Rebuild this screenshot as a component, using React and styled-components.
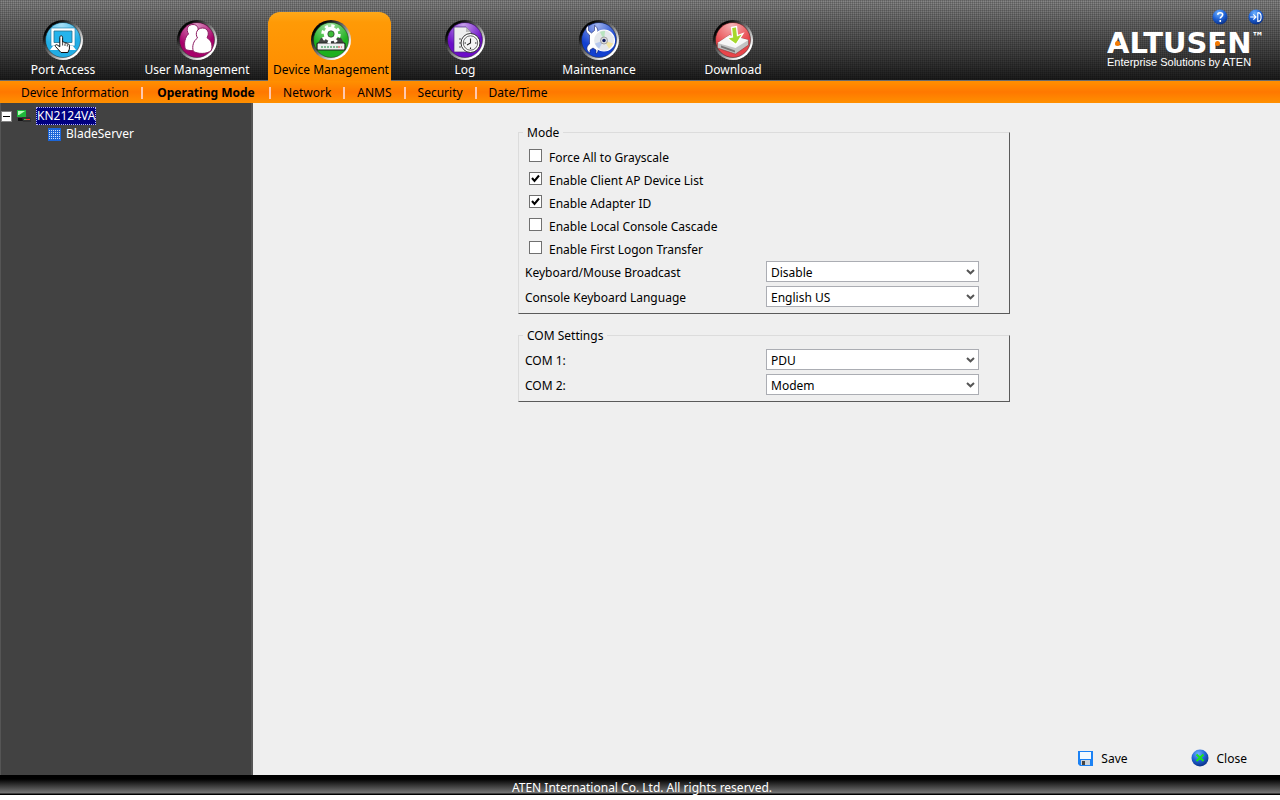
import React, { useState } from 'react';
import styled, { createGlobalStyle } from 'styled-components';

const tabs = [
  { label: 'Port Access', color: '#22aee6', icon: PortArt },
  { label: 'User Management', color: '#a8006a', icon: UserArt },
  { label: 'Device Management', color: '#1fb01f', icon: DeviceArt },
  { label: 'Log', color: '#6c0cc8', icon: LogArt },
  { label: 'Maintenance', color: '#1240d0', icon: MaintenanceArt },
  { label: 'Download', color: '#e8454a', icon: DownloadArt }
];

const links = ['Device Information', 'Operating Mode', 'Network', 'ANMS', 'Security', 'Date/Time'];

const modes = [
  { id: 'grayscale', label: 'Force All to Grayscale', on: false },
  { id: 'clientAp', label: 'Enable Client AP Device List', on: true },
  { id: 'adapterId', label: 'Enable Adapter ID', on: true },
  { id: 'cascade', label: 'Enable Local Console Cascade', on: false },
  { id: 'transfer', label: 'Enable First Logon Transfer', on: false }
];

function PortArt() {
  return (
    <g>
      <path d="M9 9h24v18H9z" fill="#fff" stroke="#157aa8" strokeWidth=".6" />
      <path d="M12 12h18v11.500H12z" fill="#25b4ec" stroke="#28708e" strokeWidth=".8" />
      <path d="M8 31l3-4h20l3 4z" fill="#fff" />
      <path
        d="M19 33.500l-5.500-6c-1-1.200.6-2.400 1.800-1.500l2.500 1.800v-9.500c0-2 2.800-2 2.800 0v5c1-.7 2.300-.2 2.400.8 1-.5 2.200 0 2.400.9 1-.3 2 .4 2 1.400v3.600l-1.500 3.500z"
        fill="#fff"
        stroke="#111"
        strokeWidth="1"
      />
      <path d="M20.600 23.500v3M23 24.500v2.500M25.300 25.500v2" stroke="#111" strokeWidth=".8" />
    </g>
  );
}

function UserArt() {
  return (
    <g fill="#fff" stroke="#8c1a62" strokeWidth="1">
      <path d="M12.500 15c-3-5-.5-9.500 4.500-9.500s6.500 5 4 9c4 3 6 9 3.500 15-4 3-11 2.500-15 1-2-6-.5-12.500 3-15.500z" />
      <path d="M21.500 19c-3-5 0-10 5-10s7.500 5 4.500 9.700c4.500 2.800 6 7.800 4.300 12.800-4.500 4-14 3.500-18 .8-1.500-5.300.2-10.500 4.200-13.300z" />
    </g>
  );
}

function DeviceArt() {
  return (
    <g>
      <path d="M8 24l3-5h20l3 5z" fill="#444" />
      <rect x="7" y="24" width="28" height="7" rx="1" fill="#eee" stroke="#222" strokeWidth="1.200" />
      <path d="M11 28h17" stroke="#188a38" strokeDasharray="2 1" />
      <path d="M28 28h4" stroke="#d33" strokeDasharray="2 1" />
      <circle cx="21" cy="15" r="8.200" fill="none" stroke="#fff" strokeWidth="3" strokeDasharray="3.200 3.240" />
      <circle cx="21" cy="15" r="5" fill="none" stroke="#fff" strokeWidth="4.500" />
      <circle cx="21" cy="15" r="3.200" fill="#3cbc38" stroke="#333" strokeWidth=".7" />
    </g>
  );
}

function LogArt() {
  return (
    <g>
      <path d="M10 8h12l5 5v20H10z" fill="#eee" stroke="#45267c" strokeWidth=".7" />
      <path d="M22 8v5h5z" fill="#bbb" />
      <path d="M15 20h2M15 24h2M15 28h2" stroke="#555" />
      <circle cx="26.500" cy="24" r="9.500" fill="#fff" stroke="#333" />
      <circle cx="26.500" cy="24" r="7.200" fill="#f4f4f4" stroke="#555" strokeWidth=".9" />
      <path
        d="M26.500 19.500V24l-3.500 2M26.500 30v-1.500M32.500 24H31M22 24h-1.500"
        stroke="#222"
        strokeWidth="1.100"
        fill="none"
      />
    </g>
  );
}

function MaintenanceArt() {
  return (
    <g>
      <path
        d="M10.500 6.500v5l3 2.500 3-2.500V6.500c4 2 4.500 8 1 10.500v9c3.500 2 3.500 7 .5 9v-4l-3-2-3 2v3c-4-2-4-7-.5-9v-9c-4.500-3-4.500-7.500-1-9.500z"
        fill="#fff"
        stroke="#15246f"
        strokeWidth=".6"
      />
      <circle cx="26" cy="21.500" r="10.500" fill="#e5e8ec" stroke="#fff" strokeWidth="1.200" />
      <path d="M26 21.500l-4-8.500a9.500 9.500 0 0 1 5-1z" fill="#b9e4c0" />
      <path d="M26 21.500l9 3a9.500 9.500 0 0 1-4 5z" fill="#f3e5a2" />
      <path d="M26 21.500l-9 3a9.500 9.500 0 0 0 4 5z" fill="#b7c9ee" />
      <circle cx="26" cy="21.500" r="3.500" fill="#ddd" stroke="#888" strokeWidth=".7" />
      <circle cx="26" cy="21.500" r="1.700" fill="#101c60" />
    </g>
  );
}

function DownloadArt() {
  return (
    <g>
      <path d="M5.500 24l12-8 19 5v5l-13 9-18-6z" fill="#c2c2c2" stroke="#733" strokeWidth=".5" />
      <path d="M5.500 24l12-8 19 5-13 8z" fill="#f6f6f6" />
      <path d="M9 26.500l14 5v2l-14-5z" fill="#777" />
      <path d="M19.500 8.500l5-1 1 9 5.500-2-7 11-9-6.500 5.500-1z" fill="#a6d82c" stroke="#fff" strokeWidth="1.300" />
    </g>
  );
}

function TabIcon({ id, color, art: Art }) {
  return (
    <svg width="42" height="42" viewBox="0 0 42 42" aria-hidden="true">
      <defs>
        <linearGradient id={`rim${id}`} x1="0" y1="0" x2="1" y2="1">
          <stop offset=".2" stopColor="#050505" />
          <stop offset=".5" stopColor="#777" />
          <stop offset=".8" stopColor="#fff" />
        </linearGradient>
        <radialGradient id={`shine${id}`} cx=".45" cy=".05" r=".65">
          <stop offset="0" stopColor="#fff" stopOpacity=".6" />
          <stop offset="1" stopColor="#fff" stopOpacity="0" />
        </radialGradient>
      </defs>
      <circle cx="21" cy="21" r="20" fill={`url(#rim${id})`} />
      <circle cx="21" cy="21" r="17.500" fill={color} stroke="#222" strokeOpacity=".5" />
      <circle cx="21" cy="21" r="17" fill={`url(#shine${id})`} />
      <Art />
    </svg>
  );
}

function Orb({ size, children }) {
  return (
    <svg width={size} height={size} viewBox="0 0 18 18" aria-hidden="true">
      <defs>
        <radialGradient id="orb" cx=".4" cy=".25" r=".75">
          <stop offset="0" stopColor="#6fb2ff" />
          <stop offset=".55" stopColor="#1f62d6" />
          <stop offset="1" stopColor="#0b3288" />
        </radialGradient>
      </defs>
      <circle cx="9" cy="9" r="8.500" fill="url(#orb)" />
      {children}
    </svg>
  );
}

function SelectRow({ id, label, options }) {
  return (
    <FieldRow>
      <label htmlFor={id}>{label}</label>
      <SelectWrap>
        <Select id={id} name={id}>
          {options.map(option => (
            <option key={option}>{option}</option>
          ))}
        </Select>
        <svg width="9" height="6" viewBox="0 0 9 6" aria-hidden="true">
          <path d="M1 1l3.500 3.300L8 1" fill="none" stroke="#555" strokeWidth="2" />
        </svg>
      </SelectWrap>
    </FieldRow>
  );
}

export default function App() {
  const [checked, setChecked] = useState(() =>
    Object.fromEntries(modes.map(mode => [mode.id, mode.on]))
  );

  const handleChange = event => {
    const { name, checked: value } = event.target;
    setChecked(prev => ({ ...prev, [name]: value }));
  };

  return (
    <Page>
      <GlobalStyle />
      <Header>
        <Tabs>
          {tabs.map((tab, index) => (
            <Tab key={tab.label} type="button" $active={index === 2}>
              <TabIcon id={index} color={tab.color} art={tab.icon} />
              <span>{tab.label}</span>
            </Tab>
          ))}
        </Tabs>
        <Brand>
          <HeaderTools>
            <IconButton type="button" aria-label="Help">
              <Orb size={16}>
                <path
                  d="M6.500 6.500c0-3 5.500-3 5.500 0 0 2-2.700 2-2.700 4.300M9.300 12.500v2"
                  fill="none"
                  stroke="#fff"
                  strokeWidth="1.800"
                />
              </Orb>
            </IconButton>
            <IconButton type="button" aria-label="Logout">
              <Orb size={16}>
                <path
                  d="M2.500 9h6M6 6l3 3-3 3M11 4v10c5 0 5-10 0-10"
                  fill="none"
                  stroke="#fff"
                  strokeWidth="1.300"
                />
              </Orb>
            </IconButton>
          </HeaderTools>
          <Logo>
            <DotLetter>A</DotLetter>LTUS<DotLetter>E</DotLetter>N<sup>™</sup>
          </Logo>
          <Tagline>Enterprise Solutions by ATEN</Tagline>
        </Brand>
      </Header>
      <SubNav>
        {links.map((link, index) => (
          <SubLink key={link} href="#" $active={index === 1}>
            {link}
          </SubLink>
        ))}
      </SubNav>
      <Body>
        <Sidebar>
          {/* device tree */}
          <TreeRow>
            <Toggle type="button" aria-label="Collapse" />
            <svg width="14" height="12" viewBox="0 0 14 12" aria-hidden="true">
              <path d="M0 0h9v7H0z" fill="#1fb83a" />
              <path d="M1 1h7L2 5H1z" fill="#b4ffb8" />
              <path d="M1 8h6v3H1z" fill="#111" />
              <path d="M5 7h8l1 2v3H6z" fill="#333" />
              <path d="M7 9.500h2" stroke="#30e030" />
              <path d="M9 9.500h4" stroke="#ff3030" />
            </svg>
            <TreeLink href="#" $selected>
              KN2124VA
            </TreeLink>
          </TreeRow>
          <TreeRow $child>
            <svg width="13" height="13" viewBox="0 0 13 13" aria-hidden="true">
              <path d="M0 0h13v13H0z" fill="#1c66d8" />
              <path
                d="M1 2.500h11M1 4.500h11M1 6.500h11M1 8.500h11M1 10.500h11"
                stroke="#cfe4ff"
                strokeDasharray="1 1"
              />
            </svg>
            <TreeLink href="#">BladeServer</TreeLink>
          </TreeRow>
          {/* end of device tree */}
        </Sidebar>
        <Main>
          <Panel>
            <legend>Mode</legend>
            {modes.map(mode => (
              <CheckRow key={mode.id}>
                <CheckBox
                  type="checkbox"
                  id={mode.id}
                  name={mode.id}
                  checked={checked[mode.id]}
                  onChange={handleChange}
                />
                <label htmlFor={mode.id}>{mode.label}</label>
              </CheckRow>
            ))}
            <SelectRow id="broadcast" label="Keyboard/Mouse Broadcast" options={['Disable', 'Enable']} />
            <SelectRow id="language" label="Console Keyboard Language" options={['English US', 'English UK']} />
          </Panel>
          <Panel>
            <legend>COM Settings</legend>
            <SelectRow id="com1" label="COM 1:" options={['PDU', 'Modem']} />
            <SelectRow id="com2" label="COM 2:" options={['Modem', 'PDU']} />
          </Panel>
          <Actions>
            <ActionButton type="button">
              <svg width="15" height="15" viewBox="0 0 15 15" aria-hidden="true">
                <path d="M0 0h15v15H2l-2-2z" fill="#1c82f4" />
                <path d="M2 1h11v7H2z" fill="#f4faff" />
                <path d="M3 9h9v5H3z" fill="#ccd3da" />
                <path d="M4 10h3v4H4z" fill="#444" />
              </svg>
              <span>Save</span>
            </ActionButton>
            <ActionButton type="button">
              <Orb size={18}>
                <path d="M5.500 5.500l7 6.500M12.500 5.500l-7 6.500" stroke="#19e519" strokeWidth="2" />
              </Orb>
              <span>Close</span>
            </ActionButton>
          </Actions>
        </Main>
      </Body>
      <Footer>ATEN International Co. Ltd. All rights reserved.</Footer>
    </Page>
  );
}

const GlobalStyle = createGlobalStyle`
  * {
    box-sizing: border-box;
  }
  body {
    margin: 0;
    background: #fff;
  }
  body, button, select {
    font-family: Tahoma, "Noto Sans", sans-serif;
    font-size: 12px;
    line-height: 16px;
    color: #000;
  }
  button {
    padding: 0;
    border: 0;
    background: none;
    cursor: pointer;
  }
  a {
    color: inherit;
    text-decoration: none;
  }
  svg {
    display: block;
    flex: none;
  }
`;

const Page = styled.div`
  display: flex;
  flex-direction: column;
  min-height: 100vh;
  padding-bottom: 5px;
`;

const Header = styled.header`
  display: flex;
  justify-content: space-between;
  height: 81px;
  border-bottom: 1px solid #6b6b6b;
  background:
    repeating-linear-gradient(90deg, rgba(0, 0, 0, 0.16) 0 1px, transparent 1px 2px),
    repeating-linear-gradient(rgba(0, 0, 0, 0.16) 0 1px, transparent 1px 2px),
    linear-gradient(#888, #1c1c1c);
`;

const Tabs = styled.nav`
  display: flex;
  align-items: flex-end;
  gap: 11px;
  margin-bottom: -1px;
`;

const Tab = styled.button`
  display: flex;
  flex-direction: column;
  align-items: center;
  gap: 1px;
  width: 123px;
  height: 69px;
  padding: 7px 0 0 3px;
  border-radius: 12px 12px 0 0;
  white-space: nowrap;
  color: ${({ $active }) => ($active ? '#000' : '#fff')};
  background: ${({ $active }) => ($active ? 'linear-gradient(#ffa818, #ff9a06 15%, #ff8c00)' : 'none')};
`;

const Brand = styled.div`
  display: flex;
  flex-direction: column;
  width: 173px;
  padding: 9px 16px 0 0;
  color: #fff;
`;

const HeaderTools = styled.div`
  display: flex;
  justify-content: flex-end;
  gap: 20px;
`;

const IconButton = styled.button`
  width: 16px;
  height: 16px;
`;

const Logo = styled.div`
  display: flex;
  font: bold 29px/26px "DejaVu Sans", sans-serif;
  margin-top: 5px;
  sup {
    font-size: 12px;
    line-height: 14px;
  }
`;

const DotLetter = styled.span`
  position: relative;
  &::after {
    content: '';
    position: absolute;
    top: 11px;
    left: 8px;
    width: 5px;
    height: 5px;
    border-radius: 50%;
    background: #f47a00;
  }
`;

const Tagline = styled.div`
  font: 11px/12px "Liberation Sans", Arial, sans-serif;
  white-space: nowrap;
`;

const SubNav = styled.nav`
  display: flex;
  align-items: center;
  height: 22px;
  padding: 1px 0 0 9px;
  background: linear-gradient(#ff9000, #ff7800 50%, #ff9000);
`;

const SubLink = styled.a`
  min-width: ${({ $active }) => ($active ? '128px' : '0')};
  padding: 0 12px;
  line-height: 12px;
  text-align: center;
  font-weight: ${({ $active }) => ($active ? 'bold' : 'normal')};
  & + & {
    border-left: 2px solid #ffc8b0;
  }
`;

const Body = styled.div`
  display: flex;
  flex: 1;
`;

const Sidebar = styled.aside`
  width: 253px;
  padding-top: 4px;
  border: solid #555;
  border-width: 0 2px 0 1px;
  background: #424242;
  color: #fff;
`;

const TreeRow = styled.div`
  display: flex;
  align-items: center;
  gap: ${({ $child }) => ($child ? '4px' : '5px')};
  height: 18px;
  padding-left: ${({ $child }) => ($child ? '47px' : '0')};
`;

const Toggle = styled.button`
  display: grid;
  place-items: center;
  width: 11px;
  height: 11px;
  border: 1px solid #808080;
  background: #fff;
  &::before {
    content: '';
    width: 7px;
    height: 1px;
    background: #000;
  }
`;

const TreeLink = styled.a`
  border: 1px dotted ${({ $selected }) => ($selected ? '#b0b0ff' : 'transparent')};
  background: ${({ $selected }) => ($selected ? '#000080' : 'none')};
`;

const Main = styled.main`
  display: flex;
  flex: 1;
  flex-direction: column;
  align-items: center;
  padding: 21px 5px 8px 0;
  background: #efefef;
`;

const Panel = styled.fieldset`
  width: 492px;
  margin: 0;
  padding: 4px 6px 4px 6px;
  border: 1px solid;
  border-color: #dcdcdc #5a5a5a #5a5a5a #dcdcdc;
  legend {
    margin-left: -2px;
    padding: 1px 4px 0;
    line-height: 15px;
  }
  & + & {
    margin-top: 13px;
  }
`;

const CheckRow = styled.div`
  display: flex;
  align-items: center;
  gap: 7px;
  height: 23px;
  padding-left: 4px;
  label {
    padding-top: 4px;
  }
`;

const CheckBox = styled.input`
  appearance: none;
  width: 13px;
  height: 13px;
  margin: 0;
  border: 1px solid #707070;
  background: #fff;
  &:checked {
    background: #fff
      url("data:image/svg+xml,%3Csvg xmlns='http://www.w3.org/2000/svg' viewBox='0 0 11 11'%3E%3Cpath d='M2 5l2.500 3L9 2.500' fill='none' stroke='%23000' stroke-width='2'/%3E%3C/svg%3E");
  }
`;

const FieldRow = styled.div`
  display: grid;
  grid-template-columns: 241px 213px;
  align-items: center;
  height: 25px;
  label {
    padding-top: 2px;
  }
`;

const SelectWrap = styled.div`
  position: relative;
  svg {
    position: absolute;
    top: 8px;
    right: 4px;
    pointer-events: none;
  }
`;

const Select = styled.select`
  display: block;
  appearance: none;
  width: 100%;
  height: 21px;
  padding: 2px 4px 0;
  border: 1px solid #abadb3;
  border-radius: 0;
  background: #fff;
`;

const Actions = styled.div`
  display: flex;
  align-self: flex-end;
  gap: 63px;
  margin-top: auto;
  padding-right: 28px;
`;

const ActionButton = styled.button`
  display: flex;
  align-items: center;
  gap: 8px;
  height: 18px;
  span {
    padding-top: 2px;
  }
`;

const Footer = styled.footer`
  height: 20px;
  padding: 5px 0 0 4px;
  line-height: 15px;
  text-align: center;
  color: #fff;
  background: linear-gradient(#000 20%, #777 90%, #000 95%);
`;
